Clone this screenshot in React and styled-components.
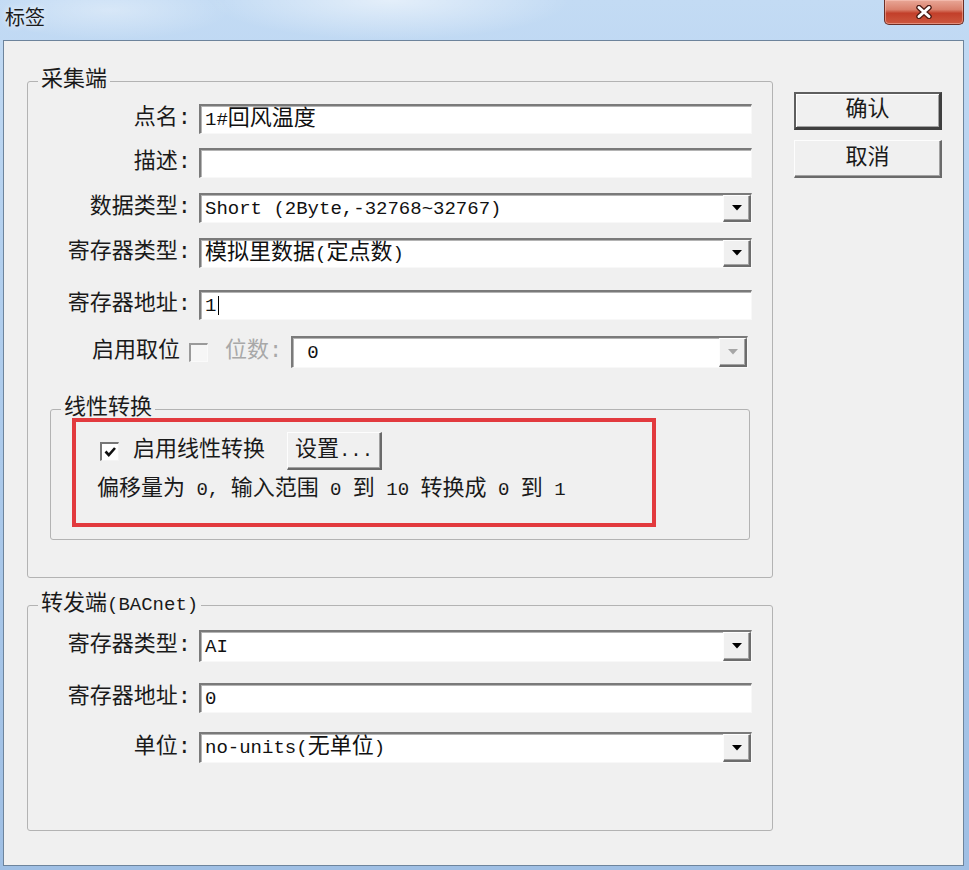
import React from 'react';
import styled, { createGlobalStyle, css } from 'styled-components';

const GlobalStyle = createGlobalStyle`
  html, body {
    margin: 0;
    padding: 0;
  }
  body {
    width: 969px;
    height: 870px;
    overflow: hidden;
    background: #b4cfee;
    font-family: "Liberation Mono", "Noto Sans CJK SC", monospace;
    color: #1a1a1a;
  }
`;

const Frame = styled.div`
  width: 969px;
  height: 870px;
  box-sizing: border-box;
  padding: 0 5px 4px 3px;
  display: flex;
  flex-direction: column;
  background:
    radial-gradient(ellipse 180px 40px at 390px 0px, rgba(255, 255, 255, 0.55), transparent),
    radial-gradient(ellipse 120px 30px at 110px 10px, rgba(255, 255, 255, 0.35), transparent),
    linear-gradient(180deg, #c3dbf4 0%, #b2cfee 30%, #9fbfe4 100%);
`;

const TitleBar = styled.div`
  height: 40px;
  flex-shrink: 0;
  display: flex;
  justify-content: space-between;
  align-items: flex-start;
`;

const Caption = styled.div`
  margin: 7px 0 0 2px;
  font-family: "Noto Sans CJK SC", sans-serif;
  font-size: 20px;
  line-height: 20px;
  color: #1c1c1c;
  text-shadow: 0 0 6px rgba(255, 255, 255, 0.9);
`;

const CloseBtn = styled.div`
  width: 80px;
  height: 25px;
  box-sizing: border-box;
  border: 1px solid #6a2e26;
  border-top: none;
  border-radius: 0 0 5px 5px;
  background: linear-gradient(180deg, #e9a797 0%, #d9806c 40%, #c23f2a 55%, #cd583f 100%);
  box-shadow: inset 0 0 0 1px rgba(255, 210, 200, 0.45);
  display: flex;
  align-items: center;
  justify-content: center;
`;

const Client = styled.div`
  flex: 1;
  box-sizing: border-box;
  border: 1px solid #6d849c;
  background: #f0f0f0;
  display: flex;
  align-items: flex-start;
  gap: 21px;
  padding: 29px 0 0 23px;
`;

const Column = styled.div`
  width: 746px;
  display: flex;
  flex-direction: column;
`;

const GroupBox = styled.fieldset`
  margin: ${p => p.$margin || '0'};
  padding: 0;
  min-width: 0;
  border: 1px solid #b3b3b3;
  border-radius: 3px;
`;

const Legend = styled.legend`
  margin-left: 10px;
  padding: 0 3px;
  font-size: 22px;
  line-height: 22px;
  color: #1a1a1a;
`;

const GroupBody = styled.div`
  padding: ${p => p.$pad};
  display: flex;
  flex-direction: column;
`;

const FieldRow = styled.div`
  display: grid;
  grid-template-columns: 163px 1fr;
  column-gap: 8px;
  align-items: stretch;
  height: ${p => p.$h || 30}px;
  margin-top: ${p => p.$mt || 0}px;
`;

const Label = styled.div`
  align-self: center;
  text-align: right;
  font-size: 22px;
  line-height: 22px;
  white-space: nowrap;
`;

const Mono = styled.span`
  font-family: "Liberation Mono", monospace;
  font-size: 19px;
`;

const sunken = css`
  box-sizing: border-box;
  background: #fff;
  border-style: solid;
  border-width: 2px 1px 1px 2px;
  border-color: #7a7a7a #f8f8f8 #f8f8f8 #7a7a7a;
  box-shadow: inset 1px 1px 0 #b4b4b4;
`;

const TextBox = styled.div`
  ${sunken}
  display: flex;
  align-items: center;
  padding-left: 4px;
  font-size: 22px;
  line-height: 22px;
  white-space: nowrap;
  overflow: hidden;
  color: #111;
`;

const Combo = styled.div`
  ${sunken}
  display: flex;
  align-items: stretch;
  flex: ${p => (p.$grow ? 1 : 'none')};
  margin-left: ${p => p.$ml || 0}px;
  margin-right: ${p => p.$mr || 0}px;
`;

const ComboValue = styled.div`
  flex: 1;
  display: flex;
  align-items: center;
  padding-left: ${p => p.$pl || 4}px;
  font-size: 22px;
  line-height: 22px;
  white-space: nowrap;
  overflow: hidden;
  color: #111;
`;

const DropBtn = styled.div`
  width: 28px;
  box-sizing: border-box;
  background: #f0f0f0;
  border-style: solid;
  border-width: 1px 2px 2px 1px;
  border-color: #fdfdfd #6c6c6c #6c6c6c #fdfdfd;
  box-shadow: inset -1px -1px 0 #a3a3a3;
  display: flex;
  align-items: center;
  justify-content: center;
`;

const Caret = styled.span`
  display: inline-block;
  width: 1px;
  height: 19px;
  margin-left: 2px;
  background: #000;
  vertical-align: middle;
`;

const BitRow = styled.div`
  display: flex;
  align-items: stretch;
  height: 32px;
  margin-top: 16px;
`;

const InlineText = styled.div`
  align-self: center;
  font-size: 22px;
  line-height: 22px;
  white-space: nowrap;
  color: ${p => (p.$disabled ? '#a8a8a8' : '#1a1a1a')};
  margin-left: ${p => p.$ml || 0}px;
`;

const Check = styled.div`
  align-self: center;
  width: 19px;
  height: 19px;
  box-sizing: border-box;
  flex-shrink: 0;
  margin-left: ${p => p.$ml || 0}px;
  background: ${p => (p.$disabled ? '#f6f6f6' : '#fff')};
  border-style: solid;
  border-width: 2px 1px 1px 2px;
  border-color: ${p => (p.$disabled ? '#9a9a9a #fafafa #fafafa #9a9a9a' : '#767676 #f4f4f4 #f4f4f4 #767676')};
  display: flex;
  align-items: center;
  justify-content: center;
`;

const Highlight = styled.div`
  position: relative;
  width: 584px;
  box-sizing: border-box;
  margin: -2px 0 12px 21px;
  border: 4px solid #e23a3e;
  padding: 10px 0 22px 21px;
  display: flex;
  flex-direction: column;
`;

const CheckRow = styled.div`
  display: flex;
  align-items: center;
  height: 38px;
`;

const InfoLine = styled.div`
  margin-top: 9px;
  font-size: 22px;
  line-height: 22px;
  white-space: nowrap;
`;

const Button = styled.div`
  width: ${p => p.$w || 148}px;
  height: 38px;
  box-sizing: border-box;
  flex-shrink: 0;
  margin-left: ${p => p.$ml || 0}px;
  background: #f0f0f0;
  border-style: solid;
  border-width: 1px 2px 2px 1px;
  border-color: #fdfdfd #6a6a6a #6a6a6a #fdfdfd;
  box-shadow: inset -1px -1px 0 #a2a2a2;
  display: flex;
  align-items: center;
  justify-content: center;
  font-size: 22px;
  line-height: 22px;
  color: #1a1a1a;
  white-space: nowrap;
  ${p =>
    p.$default &&
    css`
      border-width: 2px 3px 3px 2px;
      border-color: #5e5e5e #3f3f3f #3f3f3f #5e5e5e;
      box-shadow: inset 1px 1px 0 #fff, inset -1px -1px 0 #a2a2a2;
    `}
`;

const ButtonColumn = styled.div`
  display: flex;
  flex-direction: column;
  gap: 10px;
  margin-top: 22px;
`;

const Arrow = ({ disabled }) => (
  <svg width="10" height="6" viewBox="0 0 10 6">
    <polygon points="0,0 10,0 5,5.5" fill={disabled ? '#a6a6a6' : '#000'} />
  </svg>
);

const CloseIcon = () => (
  <svg width="18" height="14" viewBox="0 0 18 14">
    <path d="M4 2.5 L14 11.5 M14 2.5 L4 11.5" stroke="#4d1c15" strokeWidth="5.5" strokeLinecap="round" />
    <path d="M4 2.5 L14 11.5 M14 2.5 L4 11.5" stroke="#fff" strokeWidth="3" strokeLinecap="round" />
  </svg>
);

const CheckMark = () => (
  <svg width="13" height="12" viewBox="0 0 13 12">
    <path d="M1.5 5.5 L4.8 9 L11 2" fill="none" stroke="#111" strokeWidth="2.6" />
  </svg>
);

const Select = ({ children, grow, ml, mr, disabled, pl }) => (
  <Combo $grow={grow} $ml={ml} $mr={mr}>
    <ComboValue $pl={pl}>{children}</ComboValue>
    <DropBtn>
      <Arrow disabled={disabled} />
    </DropBtn>
  </Combo>
);

export default function App() {
  return (
    <>
      <GlobalStyle />
      <Frame>
        <TitleBar>
          <Caption>标签</Caption>
          <CloseBtn>
            <CloseIcon />
          </CloseBtn>
        </TitleBar>
        <Client>
          <Column>
            <GroupBox>
              <Legend>采集端</Legend>
              <GroupBody $pad="12px 20px 37px 0">
                <FieldRow>
                  <Label>点名:</Label>
                  <TextBox>
                    <Mono>1#</Mono>回风温度
                  </TextBox>
                </FieldRow>
                <FieldRow $mt={14}>
                  <Label>描述:</Label>
                  <TextBox />
                </FieldRow>
                <FieldRow $mt={15}>
                  <Label>数据类型:</Label>
                  <Select>
                    <Mono>Short (2Byte,-32768~32767)</Mono>
                  </Select>
                </FieldRow>
                <FieldRow $mt={15}>
                  <Label>寄存器类型:</Label>
                  <Select>
                    模拟里数据<Mono>(</Mono>定点数<Mono>)</Mono>
                  </Select>
                </FieldRow>
                <FieldRow $mt={22}>
                  <Label>寄存器地址:</Label>
                  <TextBox>
                    <Mono>1</Mono>
                    <Caret />
                  </TextBox>
                </FieldRow>
                <BitRow>
                  <InlineText $ml={64}>启用取位</InlineText>
                  <Check $ml={9} $disabled />
                  <InlineText $ml={17} $disabled>
                    位数:
                  </InlineText>
                  <Select grow ml={9} mr={4} disabled pl={14}>
                    <Mono>0</Mono>
                  </Select>
                </BitRow>

                <GroupBox $margin="30px 2px 0 22px">
                  <Legend>线性转换</Legend>
                  <Highlight>
                    <CheckRow>
                      <Check $ml={3}>
                        <CheckMark />
                      </Check>
                      <InlineText $ml={14}>启用线性转换</InlineText>
                      <Button $w={95} $ml={22}>
                        设置<Mono>...</Mono>
                      </Button>
                    </CheckRow>
                    <InfoLine>
                      偏移量为<Mono> 0, </Mono>输入范围<Mono> 0 </Mono>到<Mono> 10 </Mono>转换成
                      <Mono> 0 </Mono>到<Mono> 1</Mono>
                    </InfoLine>
                  </Highlight>
                </GroupBox>
              </GroupBody>
            </GroupBox>

            <GroupBox $margin="16px 0 0 0">
              <Legend>
                转发端<Mono>(BACnet)</Mono>
              </Legend>
              <GroupBody $pad="14px 20px 67px 0">
                <FieldRow $h={32}>
                  <Label>寄存器类型:</Label>
                  <Select>
                    <Mono>AI</Mono>
                  </Select>
                </FieldRow>
                <FieldRow $mt={21}>
                  <Label>寄存器地址:</Label>
                  <TextBox>
                    <Mono>0</Mono>
                  </TextBox>
                </FieldRow>
                <FieldRow $mt={19} $h={31}>
                  <Label>单位:</Label>
                  <Select>
                    <Mono>no-units(</Mono>无单位<Mono>)</Mono>
                  </Select>
                </FieldRow>
              </GroupBody>
            </GroupBox>
          </Column>

          <ButtonColumn>
            <Button $default>确认</Button>
            <Button>取消</Button>
          </ButtonColumn>
        </Client>
      </Frame>
    </>
  );
}
